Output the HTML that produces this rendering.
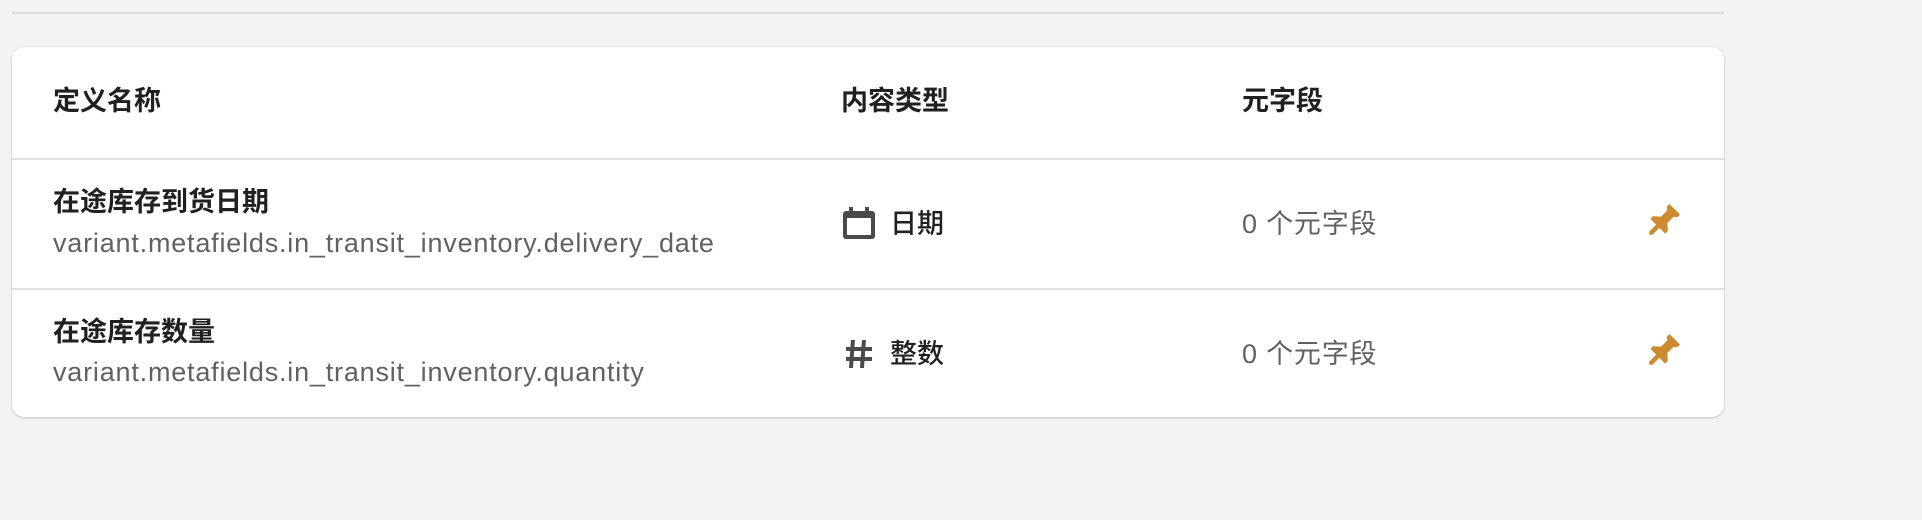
<!DOCTYPE html>
<html><head><meta charset="utf-8"><style>
body{margin:0;width:1922px;height:520px;background:#f3f3f3;font-family:"Liberation Sans","Noto Sans CJK SC",sans-serif;position:relative;overflow:hidden}
.line{position:absolute;left:12px;top:12px;width:1712px;height:2px;background:#dcdcdc}
.card{position:absolute;left:12px;top:47px;width:1712px;height:370px;background:#fff;border-radius:12px;box-shadow:0 1px 2px rgba(0,0,0,.18),0 0 0 1px rgba(0,0,0,.03)}
.div{position:absolute;left:0;width:100%;height:2px;background:#e1e1e1}
.t{position:absolute;white-space:nowrap;line-height:1}
.h{font-size:27px;font-weight:600;color:#202020}
.s{font-size:27px;color:#616161;letter-spacing:0.8px}
svg{position:absolute}
</style></head><body>
<div class="line"></div>
<div class="card">
<div class="t h" style="left:41px;top:41px">定义名称</div>
<div class="t h" style="left:829px;top:41px">内容类型</div>
<div class="t h" style="left:1230px;top:41px">元字段</div>
<div class="div" style="top:111px"></div>
<div class="t h" style="left:41px;top:142px">在途库存到货日期</div>
<div class="t s" style="left:41px;top:183px">variant.metafields.in_transit_inventory.delivery_date</div>
<svg style="left:831px;top:160px" width="32" height="32" viewBox="0 0 32 32"><rect x="0" y="4" width="32" height="28" rx="3" fill="#4a4a4a"/><rect x="4" y="11" width="24" height="17" fill="#fff"/><rect x="6" y="0" width="4" height="7" fill="#4a4a4a"/><rect x="22" y="0" width="4" height="7" fill="#4a4a4a"/></svg>
<div class="t h" style="left:878px;top:164px;font-weight:500">日期</div>
<div class="t s" style="left:1230px;top:164px">0 个元字段</div>
<svg style="left:1632px;top:157px" width="36" height="36" viewBox="0 0 24 24"><path transform="rotate(45 12 12)" d="M7 0h10v2.5l-2 1.5v6l4 3.5v2.5h-5.5v6.5l-1.5 1.5-1.5-1.5v-6.5H5v-2.5l4-3.5v-6L7 2.5z" fill="#cd8a2e"/></svg>
<div class="div" style="top:241px"></div>
<div class="t h" style="left:41px;top:272px">在途库存数量</div>
<div class="t s" style="left:41px;top:312px">variant.metafields.in_transit_inventory.quantity</div>
<svg style="left:833px;top:292px" width="28" height="30" viewBox="0 0 28 30"><g fill="#4a4a4a"><rect x="6" y="1" width="4" height="28" transform="skewX(-4)"/><rect x="17" y="1" width="4" height="28" transform="skewX(-4)"/><rect x="1" y="8" width="26" height="4"/><rect x="1" y="18" width="26" height="4"/></g></svg>
<div class="t h" style="left:878px;top:294px;font-weight:500">整数</div>
<div class="t s" style="left:1230px;top:294px">0 个元字段</div>
<svg style="left:1632px;top:287px" width="36" height="36" viewBox="0 0 24 24"><path transform="rotate(45 12 12)" d="M7 0h10v2.5l-2 1.5v6l4 3.5v2.5h-5.5v6.5l-1.5 1.5-1.5-1.5v-6.5H5v-2.5l4-3.5v-6L7 2.5z" fill="#cd8a2e"/></svg>
</div>
</body></html>
